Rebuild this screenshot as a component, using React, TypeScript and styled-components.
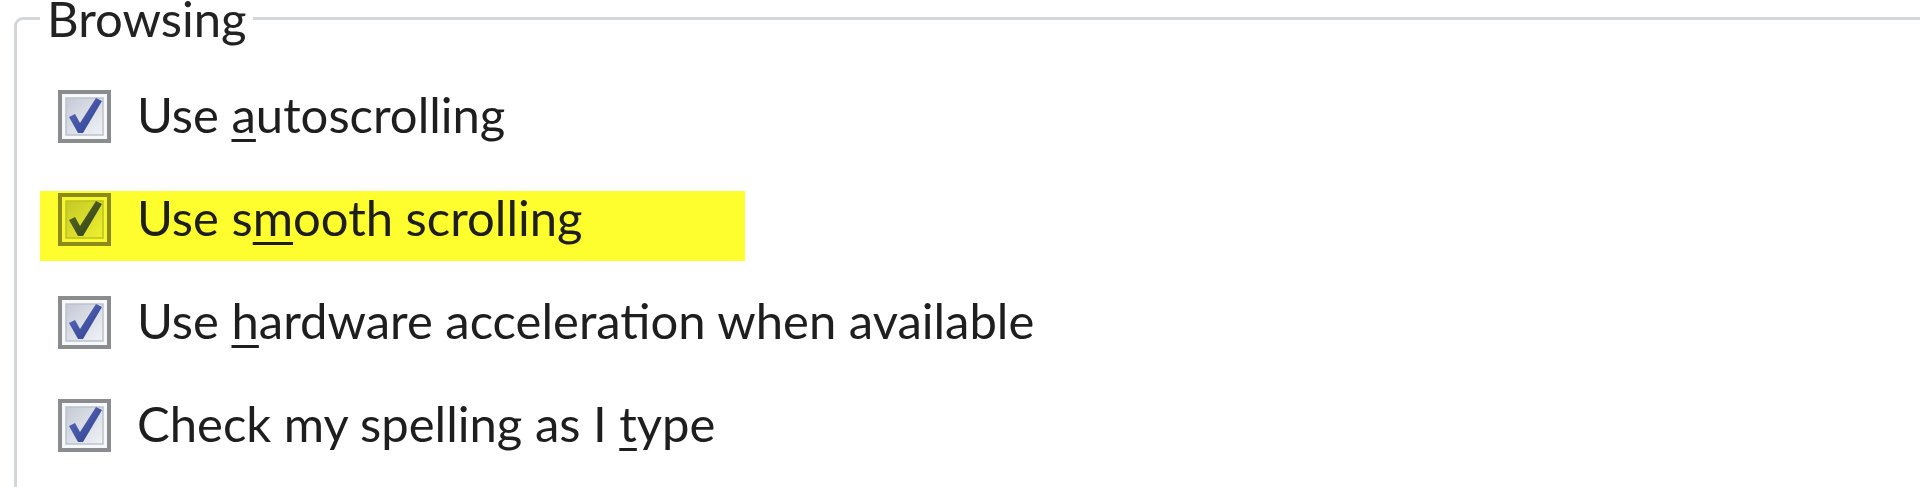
import React from 'react';
import styled, { createGlobalStyle } from 'styled-components';

const GlobalStyle = createGlobalStyle`
  html, body {
    margin: 0;
    padding: 0;
    background: #ffffff;
  }
  #root {
    width: 1920px;
    height: 487px;
    overflow: hidden;
  }
`;

const Group = styled.fieldset`
  margin: 0 0 0 14px;
  padding: 52px 0 0 23px;
  width: 2000px;
  height: 700px;
  border: 3px solid #d4d7da;
  border-radius: 9px;
  font-family: Lato, 'Open Sans', sans-serif;
  color: #1f1f1f;
`;

const Legend = styled.legend`
  padding: 0 7px;
  font-size: 49px;
  line-height: 36px;
  color: #222222;
`;

const OptionList = styled.div`
  display: flex;
  flex-direction: column;
  gap: 33px;
`;

const Row = styled.label<{ $highlight?: boolean }>`
  display: flex;
  align-items: flex-start;
  gap: 26px;
  box-sizing: border-box;
  width: max-content;
  min-width: 705px;
  height: 70px;
  padding: 2px 0 0 18px;
  background: ${({ $highlight }) => ($highlight ? '#fefe2e' : 'transparent')};
  white-space: nowrap;
`;

const Box = styled.span<{ $highlight?: boolean }>`
  display: block;
  flex: 0 0 53px;
  width: 53px;
  height: 53px;
  mix-blend-mode: ${({ $highlight }) => ($highlight ? 'multiply' : 'normal')};
`;

const Caption = styled.span`
  font-size: 49px;
  line-height: 48px;
  color: #1e1e1e;

  u {
    text-decoration-thickness: 3px;
    text-underline-offset: 6px;
  }
`;

const CheckMark = () => (
  <svg width='53' height='53' viewBox='0 0 53 53'>
    <defs>
      <linearGradient id='fill' x1='0' y1='0' x2='1' y2='1'>
        <stop offset='0' stopColor='#c4cad6' />
        <stop offset='1' stopColor='#f1f2f6' />
      </linearGradient>
      <linearGradient id='tick' x1='0' y1='0' x2='1' y2='1'>
        <stop offset='0' stopColor='#5b6cc0' />
        <stop offset='1' stopColor='#2f3f8c' />
      </linearGradient>
    </defs>
    <rect x='2' y='2' width='49' height='49' fill='#f7f8fa' stroke='#8b8c8d' strokeWidth='4' />
    <rect x='8' y='8' width='37' height='37' fill='url(#fill)' stroke='#bcc2cc' strokeWidth='1.5' />
    <path d='M11 27 L17 24 L22 33 L38 8 L44 11 L25 43 L20 43 Z' fill='url(#tick)' />
  </svg>
);

type Option = { before: string; key: string; after: string; highlight?: boolean };

const options: Option[] = [
  { before: 'Use ', key: 'a', after: 'utoscrolling' },
  { before: 'Use s', key: 'm', after: 'ooth scrolling', highlight: true },
  { before: 'Use ', key: 'h', after: 'ardware acceleration when available' },
  { before: 'Check my spelling as I ', key: 't', after: 'ype' },
];

export default function App() {
  return (
    <>
      <GlobalStyle />
      <Group>
        <Legend>Browsing</Legend>
        <OptionList>
          {options.map((o) => (
            <Row key={o.before + o.key} $highlight={o.highlight}>
              <Box $highlight={o.highlight}>
                <CheckMark />
              </Box>
              <Caption>
                {o.before}
                <u>{o.key}</u>
                {o.after}
              </Caption>
            </Row>
          ))}
        </OptionList>
      </Group>
    </>
  );
}
